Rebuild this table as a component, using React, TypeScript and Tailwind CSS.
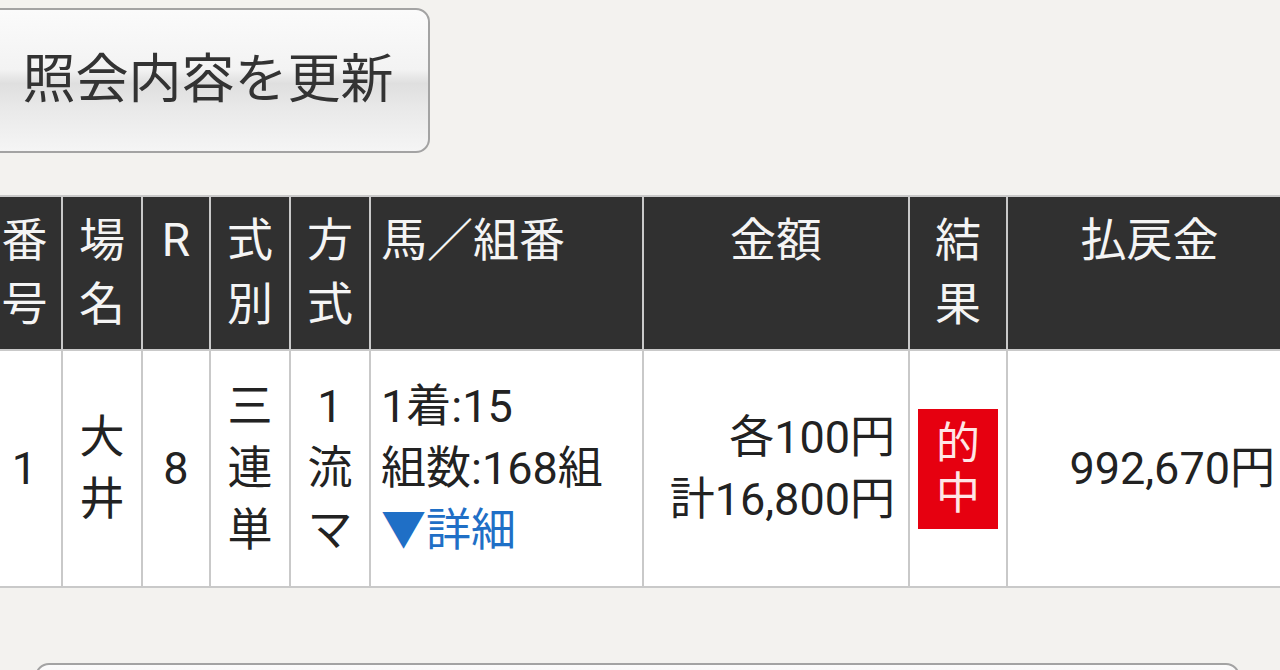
export default function App() {
  const font = { fontFamily: 'Roboto, "Noto Sans CJK JP", sans-serif' };
  const head = "bg-[#303030] text-[#f4f4f4] text-[46px] leading-[64px] pt-[11px] text-center";
  const cell = "bg-white text-[#222] text-[45px] leading-[62px] flex items-center";

  return (
    <div className="min-h-[670px] w-full overflow-hidden bg-[#f3f2ef]" style={font}>
      <div className="-ml-[14px] w-[1307px] pt-[8px]">
        <button className="flex h-[145px] w-[444px] items-center justify-center rounded-[14px] border-2 border-[#a3a3a3] bg-[linear-gradient(to_bottom,#fbfbfb_0%,#f3f3f3_42%,#dfdfdf_52%,#e9e9e9_70%,#f5f5f5_100%)] text-[53px] text-[#333]">
          照会内容を更新
        </button>

        <div className="mt-[42px] grid grid-cols-[73px_78px_66px_78px_78px_271px_264px_96px_283px] grid-rows-[152px_235px] gap-[2px] bg-[#c9c9c9] p-[2px]">
          <div className={head}>番<br />号</div>
          <div className={head}>場<br />名</div>
          <div className={head}>R</div>
          <div className={head}>式<br />別</div>
          <div className={head}>方<br />式</div>
          <div className={`${head} !text-left pl-[10px]`}>馬／組番</div>
          <div className={head}>金額</div>
          <div className={head}>結<br />果</div>
          <div className={head}>払戻金</div>

          <div className={`${cell} justify-center`}>1</div>
          <div className={`${cell} justify-center text-center`}>大<br />井</div>
          <div className={`${cell} justify-center`}>8</div>
          <div className={`${cell} justify-center text-center`}>三<br />連<br />単</div>
          <div className={`${cell} justify-center text-center`}>1<br />流<br />マ</div>
          <div className={`${cell} pl-[10px]`}>
            <div>
              <div>1着:15</div>
              <div>組数:168組</div>
              <div className="text-[#1f6fc6]">▼詳細</div>
            </div>
          </div>
          <div className={`${cell} justify-end pr-[13px] text-right`}>
            <div>
              <div>各100円</div>
              <div>計16,800円</div>
            </div>
          </div>
          <div className={`${cell} justify-center`}>
            <div className="flex h-[120px] w-[80px] flex-col items-center justify-center bg-[#e60010] text-[44px] leading-[50px] text-[#ffe6e6]">
              <span>的</span>
              <span>中</span>
            </div>
          </div>
          <div className={`${cell} justify-end pr-[16px]`}>992,670円</div>
        </div>

        <div className="ml-[49px] mt-[75px] h-[60px] w-[1205px] rounded-[14px] border-2 border-[#a3a3a3] bg-[linear-gradient(to_bottom,#fbfbfb_0%,#f3f3f3_42%,#dfdfdf_52%,#e9e9e9_70%,#f5f5f5_100%)]" />
      </div>
    </div>
  );
}
